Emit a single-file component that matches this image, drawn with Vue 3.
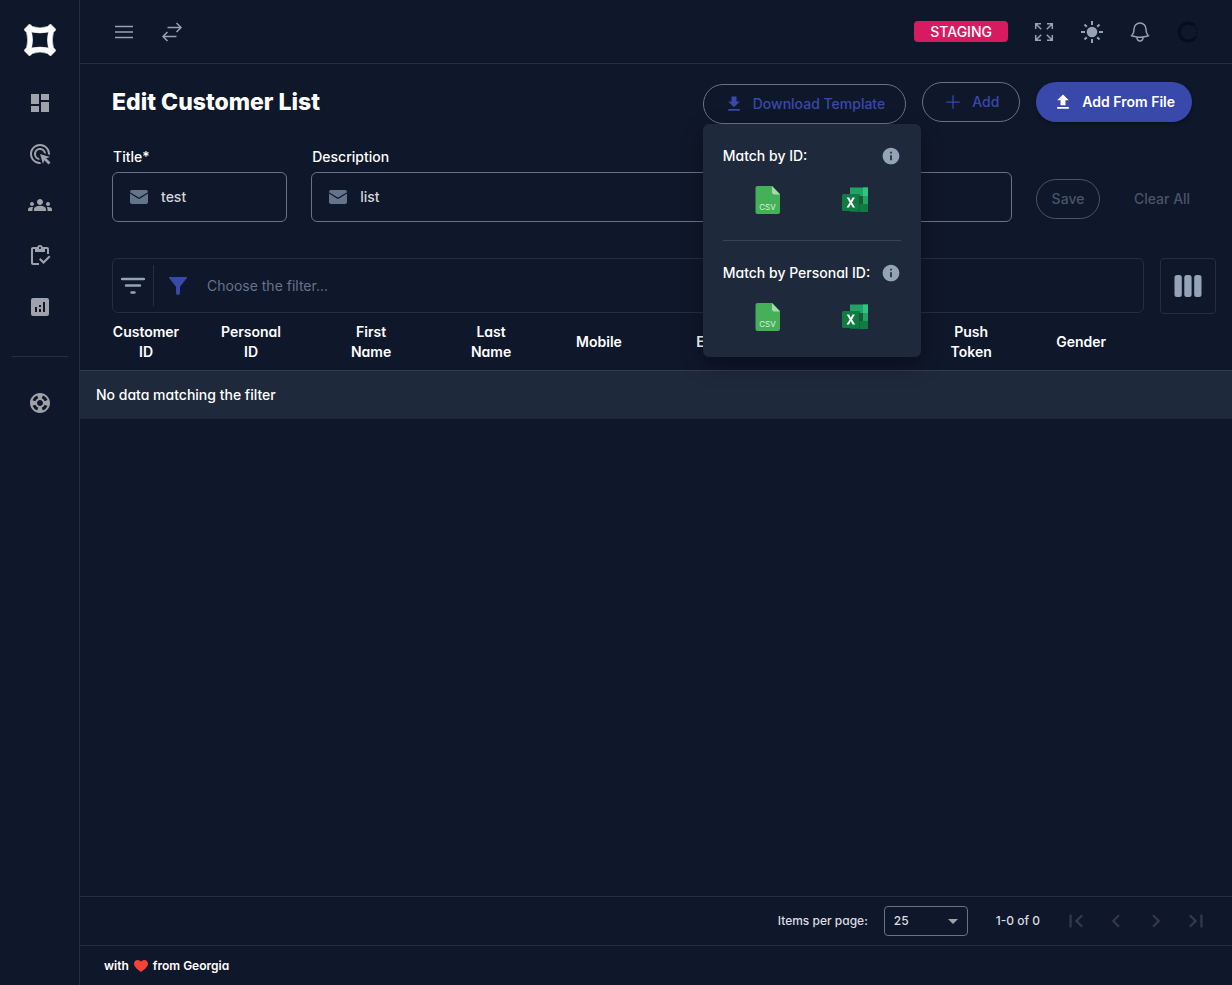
<script setup>
import { ref } from 'vue'

const title = ref('test')
const description = ref('list')
const filter = ref('')
const pageSize = ref('25')

const columns = ['Customer ID', 'Personal ID', 'First Name', 'Last Name', 'Mobile', 'Email', '', 'Push Token', 'Gender']
const templateGroups = ['Match by ID:', 'Match by Personal ID:']

const navigation = [
  { label: 'Dashboard', path: 'M3 3h8v10H3zM13 3h8v6h-8zM13 11h8v10h-8zM3 15h8v6H3z' },
  { label: 'Campaigns', path: 'M11.71 17.99A5.993 5.993 0 0 1 6 12c0-3.31 2.69-6 6-6 3.22 0 5.84 2.53 5.99 5.71l-2.1-.63a3.999 3.999 0 1 0-4.81 4.81l.63 2.1zM22 12c0 .3-.01.6-.04.9l-1.97-.59c.01-.1.01-.21.01-.31 0-4.42-3.58-8-8-8s-8 3.58-8 8 3.58 8 8 8c.1 0 .21 0 .31-.01l.59 1.97c-.3.03-.6.04-.9.04-5.52 0-10-4.48-10-10S6.48 2 12 2s10 4.48 10 10zm-3.77 4.26L22 15l-10-3 3 10 1.26-3.77 4.27 4.27 1.98-1.98-4.28-4.26z' },
  { label: 'Customers', path: 'M12 12.75c1.63 0 3.07.39 4.24.9 1.08.48 1.76 1.56 1.76 2.73V18H6v-1.61c0-1.18.68-2.26 1.76-2.73 1.17-.52 2.61-.91 4.24-.91zM4 13c1.1 0 2-.9 2-2s-.9-2-2-2-2 .9-2 2 .9 2 2 2zm1.13 1.1c-.37-.06-.74-.1-1.13-.1-.99 0-1.93.21-2.78.58A2.01 2.01 0 0 0 0 16.43V18h4.5v-1.61c0-.83.23-1.61.63-2.29zM20 13c1.1 0 2-.9 2-2s-.9-2-2-2-2 .9-2 2 .9 2 2 2zm4 3.43c0-.81-.48-1.53-1.22-1.85A6.95 6.95 0 0 0 20 14c-.39 0-.76.04-1.13.1.4.68.63 1.46.63 2.29V18H24v-1.57zM12 6c1.66 0 3 1.34 3 3s-1.34 3-3 3-3-1.34-3-3 1.34-3 3-3z' },
  { label: 'Tasks', path: 'M5 5h2v3h10V5h2v5h2V5c0-1.1-.9-2-2-2h-4.18C14.4 1.84 13.3 1 12 1s-2.4.84-2.82 2H5c-1.1 0-2 .9-2 2v14c0 1.1.9 2 2 2h6v-2H5V5zm7-2c.55 0 1 .45 1 1s-.45 1-1 1-1-.45-1-1 .45-1 1-1zM21 11.5 15.51 17l-3.01-3-1.5 1.5 4.51 4.5 6.99-7z' },
  { label: 'Analytics', path: 'M19 3H5c-1.1 0-2 .9-2 2v14c0 1.1.9 2 2 2h14c1.1 0 2-.9 2-2V5c0-1.1-.9-2-2-2zM9 17H7v-5h2v5zm4 0h-2v-3h2v3zm0-5h-2v-2h2v2zm4 5h-2V7h2v10z' }
]
const supportPath = 'M12 2C6.48 2 2 6.48 2 12s4.48 10 10 10 10-4.48 10-10S17.52 2 12 2zm7.46 7.12-2.78 1.15a4.982 4.982 0 0 0-2.95-2.94l1.15-2.78c2.1.8 3.77 2.47 4.58 4.57zM12 15c-1.66 0-3-1.34-3-3s1.34-3 3-3 3 1.34 3 3-1.34 3-3 3zM9.13 4.54l1.17 2.78a5 5 0 0 0-2.98 2.97L4.54 9.13a7.984 7.984 0 0 1 4.59-4.59zM4.54 14.87l2.78-1.15a4.968 4.968 0 0 0 2.97 2.96l-1.17 2.78a7.996 7.996 0 0 1-4.58-4.59zm10.34 4.59-1.15-2.78a4.978 4.978 0 0 0 2.95-2.97l2.78 1.17a8.007 8.007 0 0 1-4.58 4.58z'

const pagerButtons = [
  { label: 'First page', path: 'M18.41 16.59 13.82 12l4.59-4.59L17 6l-6 6 6 6zM6 6h2v12H6z' },
  { label: 'Previous page', path: 'M15.41 7.41 14 6l-6 6 6 6 1.41-1.41L10.83 12z' },
  { label: 'Next page', path: 'M10 6 8.59 7.41 13.17 12l-4.58 4.59L10 18l6-6z' },
  { label: 'Last page', path: 'M5.59 7.41 10.18 12l-4.59 4.59L7 18l6-6-6-6zM16 6h2v12h-2z' }
]
</script>

<template>
  <div class="app">
    <aside class="sidebar">
      <a class="logo" href="#" aria-label="Home">
        <svg width="32" height="32" viewBox="0 0 32 32">
          <path d="M5.5 0 8.5 2.6Q16 5.2 23.5 2.6L26.5 0 32 5.5 29.4 8.5Q27.2 16 29.4 23.5L32 26.5 26.5 32 23.5 29.4Q16 26.8 8.5 29.4L5.5 32 0 26.5 2.6 23.5Q4.8 16 2.6 8.5L0 5.5ZM7.5 8Q9.6 16 7.5 24Q16 22.2 24.5 24Q22.4 16 24.5 8Q16 9.8 7.5 8Z" fill="#fff" stroke="#fff" stroke-width=".6" stroke-linejoin="round" fill-rule="evenodd" />
        </svg>
      </a>
      <nav class="nav">
        <a v-for="item in navigation" :key="item.label" class="nav-link" href="#" :aria-label="item.label">
          <svg width="24" height="24" viewBox="0 0 24 24"><path :d="item.path" /></svg>
        </a>
        <hr class="nav-line" />
        <a class="nav-link" href="#" aria-label="Support">
          <svg width="24" height="24" viewBox="0 0 24 24"><path :d="supportPath" /></svg>
        </a>
      </nav>
    </aside>

    <div class="main">
      <header class="topbar">
        <button class="icon-button" type="button" aria-label="Toggle navigation">
          <svg class="line" width="24" height="24" viewBox="0 0 24 24"><path d="M3 6.5h18M3 12h18M3 17.5h18" /></svg>
        </button>
        <button class="icon-button" type="button" aria-label="Switch">
          <svg class="line" width="24" height="24" viewBox="0 0 24 24"><path d="M7.5 7.5h13.5M16.5 3l4.5 4.5-4.5 4.5M16.5 16.5H3M7.5 12 3 16.5l4.5 4.5" /></svg>
        </button>
        <span class="environment">STAGING</span>
        <button class="icon-button" type="button" aria-label="Fullscreen">
          <svg class="line" width="24" height="24" viewBox="0 0 24 24"><path d="M3.7 9V3.7H9M3.7 3.7l5.5 5.5M15 3.7h5.3V9M20.3 3.7l-5.5 5.5M3.7 15v5.3H9M3.7 20.3l5.5-5.5M15 20.3h5.3V15M20.3 20.3l-5.5-5.5" /></svg>
        </button>
        <button class="icon-button" type="button" aria-label="Light mode">
          <svg width="24" height="24" viewBox="0 0 24 24">
            <circle cx="12" cy="12" r="5.3" fill="currentColor" />
            <path d="M12 1v4M12 19v4M1 12h4M19 12h4M4.5 4.5l2.3 2.3M17.2 17.2l2.3 2.3M4.5 19.5l2.3-2.3M17.2 6.8l2.3-2.3" fill="none" stroke="currentColor" stroke-width="2" />
          </svg>
        </button>
        <button class="icon-button" type="button" aria-label="Notifications">
          <svg class="line" width="24" height="24" viewBox="0 0 24 24"><path d="M14.86 17.08a23.85 23.85 0 0 0 5.45-1.31A8.97 8.97 0 0 1 18 9.75V9A6 6 0 0 0 6 9v.75a8.97 8.97 0 0 1-2.31 6.02c1.73.64 3.56 1.08 5.45 1.31m5.72 0a24.26 24.26 0 0 1-5.72 0m5.72 0a3 3 0 1 1-5.72 0" /></svg>
        </button>
        <button class="icon-button" type="button" aria-label="Account">
          <svg width="24" height="24" viewBox="0 0 24 24"><path d="M18 5a9 9 0 1 0 1 13" fill="none" stroke="#050d22" stroke-width="3" /><path d="M18 5a9 9 0 0 1 1 13" fill="none" stroke="#080f24" stroke-width="2" stroke-dasharray="2 2" /></svg>
        </button>
      </header>

      <main class="content">
        <section class="heading">
          <h1>Edit Customer List</h1>
          <div class="actions">
            <div class="download">
              <button class="pill outlined" type="button" aria-expanded="true">
                <svg width="20" height="20" viewBox="0 0 24 24"><path d="M19 9h-4V3H9v6H5l7 7 7-7zM5 18v2h14v-2H5z" /></svg>
                Download Template
              </button>
              <div class="menu">
                <div v-for="group in templateGroups" :key="group" class="menu-group">
                  <div class="menu-title">
                    <span>{{ group }}</span>
                    <svg class="info" width="20" height="20" viewBox="0 0 24 24"><path d="M12 2C6.48 2 2 6.48 2 12s4.48 10 10 10 10-4.48 10-10S17.52 2 12 2zm1 15h-2v-6h2v6zm0-8h-2V7h2v2z" /></svg>
                  </div>
                  <div class="files">
                    <button type="button" aria-label="CSV template">
                      <svg width="28" height="28" viewBox="0 0 28 28">
                        <path d="M3.500 0H18l8 8v18a2 2 0 0 1-2 2H3.500a2 2 0 0 1-2-2V2a2 2 0 0 1 2-2z" fill="#45b058" />
                        <path d="M18 0l8 8.500h-5.500A2.500 2.500 0 0 1 18 6z" fill="#a6dbae" />
                        <text class="csv" x="13.500" y="23.500" text-anchor="middle">CSV</text>
                      </svg>
                    </button>
                    <button type="button" aria-label="Excel template">
                      <svg width="28" height="28" viewBox="0 0 28 28">
                        <path d="M9 1.500h18v24.500H9z" fill="#21a366" />
                        <path d="M22 1.500h5V10h-5z" fill="#33c481" />
                        <path d="M22 18h5v8h-5zM9 18h13v8H9z" fill="#107c41" />
                        <path d="M9 10h13v8H9z" fill="#185c37" />
                        <path d="M22 10h5v8h-5z" fill="#21a366" />
                        <path d="M9 8h10v18H9z" fill="#0d5634" opacity=".5" />
                        <rect x="1" y="8" width="17" height="17" rx="1.500" fill="#107c41" />
                        <path d="M5.500 21.500l3.200-5.100L5.700 11.500h2.500l1.600 3.200 1.700-3.200h2.400L11 16.500l3.100 5h-2.500L9.800 18 8 21.500z" fill="#fff" />
                      </svg>
                    </button>
                  </div>
                </div>
              </div>
            </div>
            <button class="pill outlined" type="button">
              <svg class="plus" width="20" height="20" viewBox="0 0 24 24"><path d="M12 4v16M4 12h16" /></svg>
              Add
            </button>
            <button class="pill filled" type="button">
              <svg width="20" height="20" viewBox="0 0 24 24"><path d="M9 16h6v-6h4l-7-7-7 7h4zm-4 2h14v2H5z" /></svg>
              Add From File
            </button>
          </div>
        </section>

        <form class="form" @submit.prevent>
          <div class="fields">
            <div class="field">
              <label for="title">Title*</label>
              <div class="input-box">
                <svg width="24" height="24" viewBox="0 0 24 24"><path d="M3 8.600V17.500A2.500 2.500 0 0 0 5.500 19h13a2.500 2.500 0 0 0 2.500-1.500V8.600l-7.900 4.900a2 2 0 0 1-2.200 0zM21 7.200A2.200 2.200 0 0 0 18.500 5h-13A2.200 2.200 0 0 0 3 7.200l8.400 5.100a1.200 1.200 0 0 0 1.200 0z" /></svg>
                <input id="title" v-model="title" type="text" />
              </div>
            </div>
            <div class="field">
              <label for="description">Description</label>
              <div class="input-box">
                <svg width="24" height="24" viewBox="0 0 24 24"><path d="M3 8.600V17.500A2.500 2.500 0 0 0 5.500 19h13a2.500 2.500 0 0 0 2.500-1.500V8.600l-7.900 4.900a2 2 0 0 1-2.200 0zM21 7.200A2.200 2.200 0 0 0 18.500 5h-13A2.200 2.200 0 0 0 3 7.200l8.400 5.100a1.200 1.200 0 0 0 1.200 0z" /></svg>
                <input id="description" v-model="description" type="text" />
              </div>
            </div>
          </div>
          <div class="form-actions">
            <button class="save" type="submit" disabled>Save</button>
            <button class="clear" type="button" disabled>Clear All</button>
          </div>
        </form>

        <div class="filter-row">
          <div class="filter-box">
            <button class="filter-menu" type="button" aria-label="Filter options">
              <svg width="24" height="24" viewBox="0 0 24 24"><path d="M1 5h22M5 11.500h14M10.500 18.500h3" fill="none" stroke="currentColor" stroke-width="2.500" stroke-linecap="round" /></svg>
            </button>
            <svg class="funnel" width="18" height="18" viewBox="0 0 18 18"><path d="M.6 0h16.800a.6.6 0 0 1 .5 1L11 9.800V16a2 2 0 0 1-4 0V9.800L.1 1a.6.6 0 0 1 .5-1z" /></svg>
            <input v-model="filter" type="text" placeholder="Choose the filter..." aria-label="Choose the filter" />
          </div>
          <button class="columns-button" type="button" aria-label="Columns">
            <svg width="28" height="22" viewBox="0 0 28 22"><rect x=".5" width="7.300" height="22" rx="2.500" /><rect x="10.300" width="7.300" height="22" rx="2.500" /><rect x="20.200" width="7.300" height="22" rx="2.500" /></svg>
          </button>
        </div>

        <table class="customers">
          <thead>
            <tr>
              <th v-for="(column, index) in columns" :key="index" scope="col"><span>{{ column }}</span></th>
            </tr>
          </thead>
          <tbody>
            <tr><td :colspan="columns.length">No data matching the filter</td></tr>
          </tbody>
        </table>

        <div class="paginator">
          <label for="page-size">Items per page:</label>
          <div class="select-box">
            <select id="page-size" v-model="pageSize">
              <option>25</option>
              <option>50</option>
              <option>100</option>
            </select>
            <svg width="10" height="5" viewBox="0 0 10 5"><path d="M0 0h10L5 5z" /></svg>
          </div>
          <span class="range">1-0 of 0</span>
          <div class="pager">
            <button v-for="button in pagerButtons" :key="button.label" type="button" disabled :aria-label="button.label">
              <svg width="26" height="26" viewBox="0 0 24 24"><path :d="button.path" /></svg>
            </button>
          </div>
        </div>
      </main>

      <footer class="footer">
        <span>with</span>
        <svg width="14" height="12" viewBox="0 0 14 12"><path d="M7 12C4.500 9.900 0 7.100 0 3.700 0 1.500 1.700 0 3.700 0 5.100 0 6.400.7 7 1.800 7.600.7 8.900 0 10.300 0c2 0 3.700 1.500 3.700 3.700C14 7.100 9.500 9.900 7 12z" /></svg>
        <span>from Georgia</span>
      </footer>
    </div>
  </div>
</template>

<style>
body {
  background: #0f172a;
}
</style>

<style scoped>
.app {
  display: flex;
  min-height: 100vh;
  background: #0f172a;
  color: #fff;
  font: 500 14px/20px Inter, "Liberation Sans", sans-serif;
  font-feature-settings: "cv11";
}
.app *, .app {
  box-sizing: border-box;
}
svg {
  display: block;
  flex: none;
  fill: currentColor;
}
button {
  margin: 0;
  padding: 0;
  border: 0;
  background: none;
  color: inherit;
  font: inherit;
}
input, select {
  font: inherit;
  color: inherit;
  background: none;
  border: 0;
  outline: 0;
  padding: 0;
  margin: 0;
  min-width: 0;
}
.sidebar {
  flex: none;
  width: 80px;
  border-right: 1px solid #272e3f;
  color: #9fa2aa;
}
.logo {
  display: flex;
  justify-content: center;
  align-items: center;
  height: 80px;
}
.nav {
  display: flex;
  flex-direction: column;
  align-items: center;
  gap: 7px;
  padding: 1px 11px 1px 12px;
}
.nav-link {
  display: flex;
  align-items: center;
  height: 44px;
  color: inherit;
}
.nav-line {
  width: 100%;
  height: 1px;
  margin: 20px 0 17px;
  border: 0;
  background: #272e3f;
}
.main {
  display: flex;
  flex: 1;
  flex-direction: column;
  min-width: 0;
}
.topbar {
  display: flex;
  align-items: center;
  gap: 8px;
  height: 64px;
  padding: 0 24px;
  border-bottom: 1px solid #272e3f;
  color: #94a3b8;
}
.icon-button {
  display: flex;
  justify-content: center;
  align-items: center;
  width: 40px;
  height: 40px;
}
.line {
  fill: none;
  stroke: currentColor;
  stroke-width: 1.5;
}
.environment {
  margin: 0 8px 0 auto;
  padding: 0 16px;
  border-radius: 4px;
  background: #d81b60;
  color: #fff;
  line-height: 21px;
}
.content {
  display: flex;
  flex: 1;
  flex-direction: column;
}
.heading {
  display: flex;
  justify-content: space-between;
  align-items: flex-start;
  padding: 18px 40px 0 32px;
}
h1 {
  margin: 4px 0 0;
  font-size: 23px;
  font-weight: 800;
  line-height: 32px;
}
.actions {
  display: flex;
  gap: 16px;
}
.download {
  position: relative;
  margin-top: 2px;
}
.pill {
  display: flex;
  align-items: center;
  gap: 9px;
  height: 40px;
  padding: 0 17px;
  border-radius: 20px;
  font-feature-settings: normal;
  white-space: nowrap;
}
.outlined {
  padding: 0 20px;
  border: 1px solid #64748b;
  color: #3949ab;
}
.filled {
  background: #3949ab;
  color: #fff;
  font-weight: 600;
  box-shadow: 0 2px 4px rgba(0, 0, 0, 0.3);
}
.plus {
  fill: none;
  stroke: currentColor;
  stroke-width: 1.5;
}
.menu {
  position: absolute;
  z-index: 2;
  top: 40px;
  left: 0;
  width: 218px;
  padding: 0 20px;
  border-radius: 6px;
  background: #1e293b;
  box-shadow: 0 8px 20px rgba(0, 0, 0, 0.35);
}
.menu-group {
  height: 117px;
  padding-top: 22px;
}
.menu-group:first-child {
  border-bottom: 1px solid #394354;
}
.menu-group:last-child {
  height: 116px;
}
.menu-title {
  display: flex;
  justify-content: space-between;
  white-space: nowrap;
}
.info {
  color: #94a3b8;
}
.files {
  display: flex;
  justify-content: center;
  gap: 59px;
  padding-top: 20px;
}
.csv {
  fill: #d8f5dc;
  font: 400 8px Inter, sans-serif;
}
.form {
  display: flex;
  align-items: flex-end;
  gap: 24px;
  padding: 23px 24px 0 32px;
}
.fields {
  display: grid;
  flex: 1;
  grid-template-columns: 1fr 4fr;
  gap: 24px;
}
.field {
  min-width: 0;
}
.field label {
  display: block;
  margin-bottom: 5px;
  padding-left: 1px;
}
.input-box {
  display: flex;
  align-items: center;
  gap: 10px;
  height: 50px;
  padding: 0 14px;
  border: 1px solid #64748b;
  border-radius: 6px;
}
.input-box svg {
  color: #64748b;
}
.input-box input {
  width: 100%;
  color: #d4d6da;
}
.form-actions {
  display: flex;
  gap: 16px;
  padding-bottom: 3px;
  color: #475569;
  font-feature-settings: normal;
}
.save {
  width: 64px;
  height: 40px;
  border: 1px solid #475569;
  border-radius: 20px;
}
.clear {
  width: 92px;
}
.filter-row {
  display: flex;
  gap: 16px;
  padding: 36px 16px 0 32px;
}
.filter-box {
  display: flex;
  flex: 1;
  align-items: center;
  height: 55px;
  border: 1px solid #272e3f;
  border-radius: 6px;
}
.filter-menu {
  display: flex;
  align-items: center;
  width: 41px;
  height: 41px;
  padding-left: 8px;
  border-right: 1px solid #272e3f;
  color: #94a3b8;
}
.funnel {
  margin: 0 20px 0 15px;
  color: #3949ab;
}
.filter-box input {
  flex: 1;
  font-weight: 400;
}
.filter-box input::placeholder {
  color: #64748b;
  opacity: 1;
}
.columns-button {
  display: flex;
  justify-content: center;
  align-items: center;
  width: 56px;
  height: 56px;
  border: 1px solid #272e3f;
  border-radius: 4px;
  color: #94a3b8;
}
.customers {
  width: 100%;
  border-collapse: collapse;
  table-layout: fixed;
}
th {
  width: 10.42%;
  height: 56px;
  padding: 0;
  text-align: left;
  font-weight: 600;
}
th:first-child {
  width: 136px;
  padding-left: 32px;
}
th:last-child {
  width: auto;
}
th span {
  display: inline-block;
  max-width: 70px;
  text-align: center;
  vertical-align: middle;
}
th:first-child span {
  max-width: 68px;
}
td {
  height: 49px;
  padding: 0 16px;
  border-top: 1px solid #333d4e;
  background: #1e293b;
}
.paginator {
  display: flex;
  justify-content: flex-end;
  align-items: center;
  height: 49px;
  margin-top: auto;
  padding-right: 16px;
  border-top: 1px solid #272e3f;
  color: #dbdde0;
  font-size: 12px;
}
.select-box {
  display: flex;
  position: relative;
  align-items: center;
  width: 84px;
  height: 30px;
  margin: 0 28px 0 16px;
  border: 1px solid #64748b;
  border-radius: 4px;
}
.select-box select {
  width: 100%;
  height: 100%;
  padding-left: 9px;
  appearance: none;
}
.select-box svg {
  position: absolute;
  right: 9px;
  color: #9fa2aa;
  pointer-events: none;
}
.pager {
  display: flex;
  margin-left: 16px;
  color: #333a4a;
}
.pager button {
  display: flex;
  justify-content: center;
  align-items: center;
  width: 40px;
  height: 40px;
}
.footer {
  display: flex;
  align-items: center;
  gap: 5px;
  height: 40px;
  padding: 0 24px;
  border-top: 1px solid #272e3f;
  font-size: 12px;
  font-weight: 600;
}
.footer svg {
  color: #f44336;
}
</style>
